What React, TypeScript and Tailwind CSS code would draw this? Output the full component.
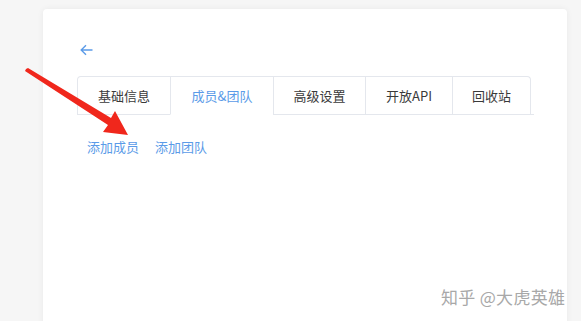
import React from "react";

const tabs = [
  { label: "基础信息", w: "w-[92px]" },
  { label: "成员&团队", w: "w-[103px]", active: true },
  { label: "高级设置", w: "w-[92px]" },
  { label: "开放API", w: "w-[87px]" },
  { label: "回收站", w: "w-[78px]" },
];

export default function App() {
  return (
    <div
      className="relative w-[581px] h-[321px] overflow-hidden bg-[#f6f6f6] pl-[43px] pt-[9px]"
      style={{ fontFamily: '"Noto Sans CJK SC", "Noto Sans", sans-serif' }}
    >
      <div className="w-[524px] h-[330px] bg-white rounded-[4px] shadow-[0_0_6px_rgba(0,0,0,0.06)] pl-[34px] pt-[31px]">
        <div className="h-[20px] pl-[3px] flex items-center text-[#5b9be8]">
          <svg width="13" height="12" viewBox="0 0 13 12" fill="none" stroke="currentColor" strokeWidth="1.4">
            <path d="M12.5 6H1.2M6 1.2L1.2 6L6 10.8" />
          </svg>
        </div>
        <div className="mt-[16px] w-[457px] border-b border-[#e4e7ed]">
          <div className="flex w-max border border-b-0 border-[#e4e7ed] rounded-t-[4px] mb-[-1px]">
            {tabs.map((t, i) => (
              <div
                key={t.label}
                className={
                  "h-[38px] flex items-center justify-center text-[13px] " +
                  t.w +
                  (i > 0 ? " border-l border-[#e4e7ed]" : "") +
                  (t.active
                    ? " text-[#5b9be8] border-b border-b-white bg-white"
                    : " text-[#3a3a3a] border-b border-b-[#e4e7ed]")
                }
              >
                {t.label}
              </div>
            ))}
          </div>
        </div>
        <div className="mt-[22px] pl-[10px] flex gap-[16px] text-[13px] text-[#5b9be8] leading-[20px]">
          <span>添加成员</span>
          <span>添加团队</span>
        </div>
      </div>

      <svg className="absolute left-0 top-0" width="581" height="321" viewBox="0 0 581 321">
        <path d="M26 69 L28 68 L111 118 L115 111 L128 135 L103 132 L108 125 L25 71 Z" fill="#f0271c" />
      </svg>

      <div
        className="absolute left-[441px] top-[284px] text-[17px] text-[#a8a8a8] whitespace-nowrap tracking-[0.3px]"
        style={{ textShadow: "0 0 2px #fff" }}
      >
        知乎 @大虎英雄
      </div>
    </div>
  );
}
